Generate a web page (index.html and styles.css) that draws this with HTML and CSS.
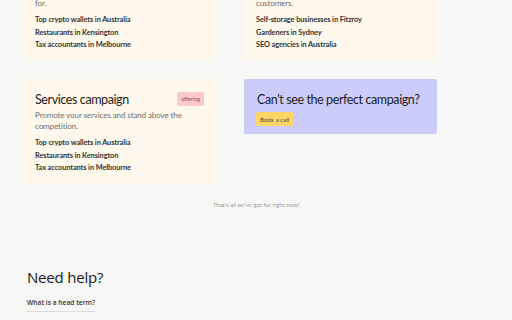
FILE: index.html
```html
<!DOCTYPE html>
<html lang="en">
<head>
<meta charset="utf-8">
<link rel="stylesheet" href="styles.css">
</head>
<body>
<main class="page">
  <section class="campaigns">
    <article class="card">
      <div class="card-head">
        <h2 class="card-title">Products campaign</h2>
      </div>
      <p class="card-desc">Show up on the products people are searching for.</p>
      <ul class="terms">
        <li>Top crypto wallets in Australia</li>
        <li>Restaurants in Kensington</li>
        <li>Tax accountants in Melbourne</li>
      </ul>
    </article>
    <article class="card">
      <div class="card-head">
        <h2 class="card-title">Local campaign</h2>
      </div>
      <p class="card-desc">Get your local business in front of nearby customers.</p>
      <ul class="terms">
        <li>Self-storage businesses in Fitzroy</li>
        <li>Gardeners in Sydney</li>
        <li>SEO agencies in Australia</li>
      </ul>
    </article>
    <article class="card">
      <div class="card-head">
        <h2 class="card-title">Services campaign</h2>
        <span class="badge">offering</span>
      </div>
      <p class="card-desc">Promote your services and stand above the competition.</p>
      <ul class="terms">
        <li>Top crypto wallets in Australia</li>
        <li>Restaurants in Kensington</li>
        <li>Tax accountants in Melbourne</li>
      </ul>
    </article>
    <article class="card card-cta">
      <h2 class="card-title">Can't see the perfect campaign?</h2>
      <button class="cta-btn" type="button">Book a call</button>
    </article>
  </section>
  <p class="end-note">That's all we've got for right now!</p>
  <section class="help">
    <h2 class="help-title">Need help?</h2>
    <div class="faq-item">What is a head term?</div>
  </section>
</main>
</body>
</html>
```
FILE: styles.css
```css
* { box-sizing: border-box; }
html, body { margin: 0; padding: 0; }
body {
  background: #f7f7f5;
  font-family: "Lato", "Open Sans", sans-serif;
  color: #222;
  overflow: hidden;
  height: 320px;
}
.page {
  margin-top: -44px;
}
.campaigns {
  display: grid;
  grid-template-columns: 193px 193px;
  column-gap: 28px;
  row-gap: 18px;
  padding-left: 23px;
  align-items: start;
}
.card {
  background: #fef9ec;
  border-radius: 2px;
  padding: 12px 12px 12px 12px;
  height: 105px;
}
.card-head {
  display: flex;
  justify-content: space-between;
  align-items: flex-start;
}
.card-title {
  margin: 0;
  font-family: "Lato", sans-serif;
  font-weight: 400;
  font-size: 12.5px;
  letter-spacing: -0.4px;
  line-height: 18px;
  color: #1c1c1c;
}
.badge {
  margin-top: 1px;
  background: #ffc9cb;
  color: #8a5558;
  font-family: "Lato", sans-serif;
  font-size: 5.5px;
  line-height: 14px;
  height: 14px;
  padding: 0 4px;
  border-radius: 2px;
}
.card-desc {
  margin: 1px 0 0 0;
  font-family: "Lato", sans-serif;
  font-size: 8px;
  letter-spacing: -0.1px;
  line-height: 11px;
  color: #6e6e6e;
}
.terms {
  list-style: none;
  margin: 5px 0 0 0;
  padding: 0;
}
.terms li {
  font-family: "Lato", sans-serif;
  font-weight: 700;
  font-size: 7.4px;
  letter-spacing: -0.1px;
  line-height: 12.5px;
  color: #333;
}
.card-cta {
  background: #cbccf9;
  height: 55px;
  padding: 12px 12px 12px 13px;
}
.cta-btn {
  display: block;
  margin: 3px 0 0 -1px;
  background: #fdd666;
  border: none;
  border-radius: 2px;
  height: 14px;
  padding: 0 4px;
  font-family: "Lato", sans-serif;
  font-size: 6.2px;
  color: #444;
}
.end-note {
  margin: 17px 0 0 0;
  text-align: center;
  font-family: "Open Sans", sans-serif;
  font-weight: 300;
  font-size: 5.9px;
  color: #555;
}
.help {
  padding-left: 27px;
  margin-top: 58px;
}
.help-title {
  margin: 0;
  font-family: "Open Sans", sans-serif;
  font-weight: 400;
  font-size: 15px;
  letter-spacing: -0.2px;
  line-height: 20px;
  color: #1a1a1a;
}
.faq-item {
  display: inline-block;
  margin-top: 11px;
  padding-bottom: 4px;
  border-bottom: 1px solid #dcdcdc;
  font-family: "Open Sans", sans-serif;
  font-weight: 600;
  font-size: 6.7px;
  color: #333;
}
```
